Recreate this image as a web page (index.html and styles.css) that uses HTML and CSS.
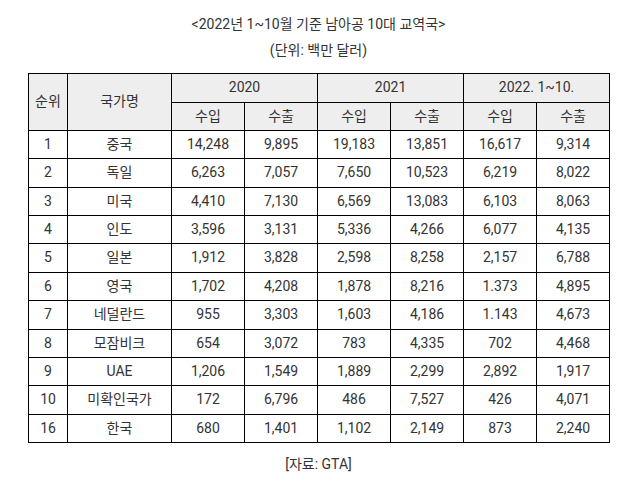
FILE: index.html
```html
<!DOCTYPE html>
<html lang="ko">
<head>
<meta charset="utf-8">
<link rel="stylesheet" href="styles.css">
</head>
<body>
<div class="wrap">
  <p class="title">&lt;2022년 1~10월 기준 남아공 10대 교역국&gt;</p>
  <p class="unit">(단위: 백만 달러)</p>
  <table class="trade">
    <colgroup>
      <col class="c-rank"><col class="c-name">
      <col class="c-num"><col class="c-num"><col class="c-num"><col class="c-num"><col class="c-num"><col class="c-num">
    </colgroup>
    <thead>
      <tr class="h1">
        <th rowspan="2">순위</th>
        <th rowspan="2">국가명</th>
        <th colspan="2">2020</th>
        <th colspan="2">2021</th>
        <th colspan="2">2022. 1~10.</th>
      </tr>
      <tr class="h2">
        <th>수입</th><th>수출</th><th>수입</th><th>수출</th><th>수입</th><th>수출</th>
      </tr>
    </thead>
    <tbody>
      <tr><td>1</td><td>중국</td><td>14,248</td><td>9,895</td><td>19,183</td><td>13,851</td><td>16,617</td><td>9,314</td></tr>
      <tr><td>2</td><td>독일</td><td>6,263</td><td>7,057</td><td>7,650</td><td>10,523</td><td>6,219</td><td>8,022</td></tr>
      <tr><td>3</td><td>미국</td><td>4,410</td><td>7,130</td><td>6,569</td><td>13,083</td><td>6,103</td><td>8,063</td></tr>
      <tr><td>4</td><td>인도</td><td>3,596</td><td>3,131</td><td>5,336</td><td>4,266</td><td>6,077</td><td>4,135</td></tr>
      <tr><td>5</td><td>일본</td><td>1,912</td><td>3,828</td><td>2,598</td><td>8,258</td><td>2,157</td><td>6,788</td></tr>
      <tr><td>6</td><td>영국</td><td>1,702</td><td>4,208</td><td>1,878</td><td>8,216</td><td>1.373</td><td>4,895</td></tr>
      <tr><td>7</td><td>네덜란드</td><td>955</td><td>3,303</td><td>1,603</td><td>4,186</td><td>1.143</td><td>4,673</td></tr>
      <tr><td>8</td><td>모잠비크</td><td>654</td><td>3,072</td><td>783</td><td>4,335</td><td>702</td><td>4,468</td></tr>
      <tr><td>9</td><td>UAE</td><td>1,206</td><td>1,549</td><td>1,889</td><td>2,299</td><td>2,892</td><td>1,917</td></tr>
      <tr><td>10</td><td>미확인국가</td><td>172</td><td>6,796</td><td>486</td><td>7,527</td><td>426</td><td>4,071</td></tr>
      <tr><td>16</td><td>한국</td><td>680</td><td>1,401</td><td>1,102</td><td>2,149</td><td>873</td><td>2,240</td></tr>
    </tbody>
  </table>
  <p class="source">[자료: GTA]</p>
</div>
</body>
</html>
```
FILE: styles.css
```css
html, body {
  margin: 0;
  padding: 0;
  background: #ffffff;
}
body {
  font-family: Roboto, "Noto Sans CJK KR", sans-serif;
  font-size: 14px;
  color: #333333;
}
.wrap {
  width: 581px;
  margin-left: 28px;
  padding-top: 11px;
  text-align: center;
}
.title, .unit, .source {
  margin: 0;
  line-height: 26px;
}
.trade {
  margin-top: 10px;
  width: 581px;
  border-collapse: collapse;
  table-layout: fixed;
}
.c-rank { width: 39px; }
.c-name { width: 104px; }
.c-num { width: 73px; }
.trade th, .trade td {
  border: 1px solid #000000;
  padding: 0;
  text-align: center;
  font-weight: normal;
  line-height: 27.36px;
  white-space: nowrap;
}
.trade th {
  background: #eeeeee;
  line-height: 27.5px;
}
.source {
  margin-top: 8px;
}
```
